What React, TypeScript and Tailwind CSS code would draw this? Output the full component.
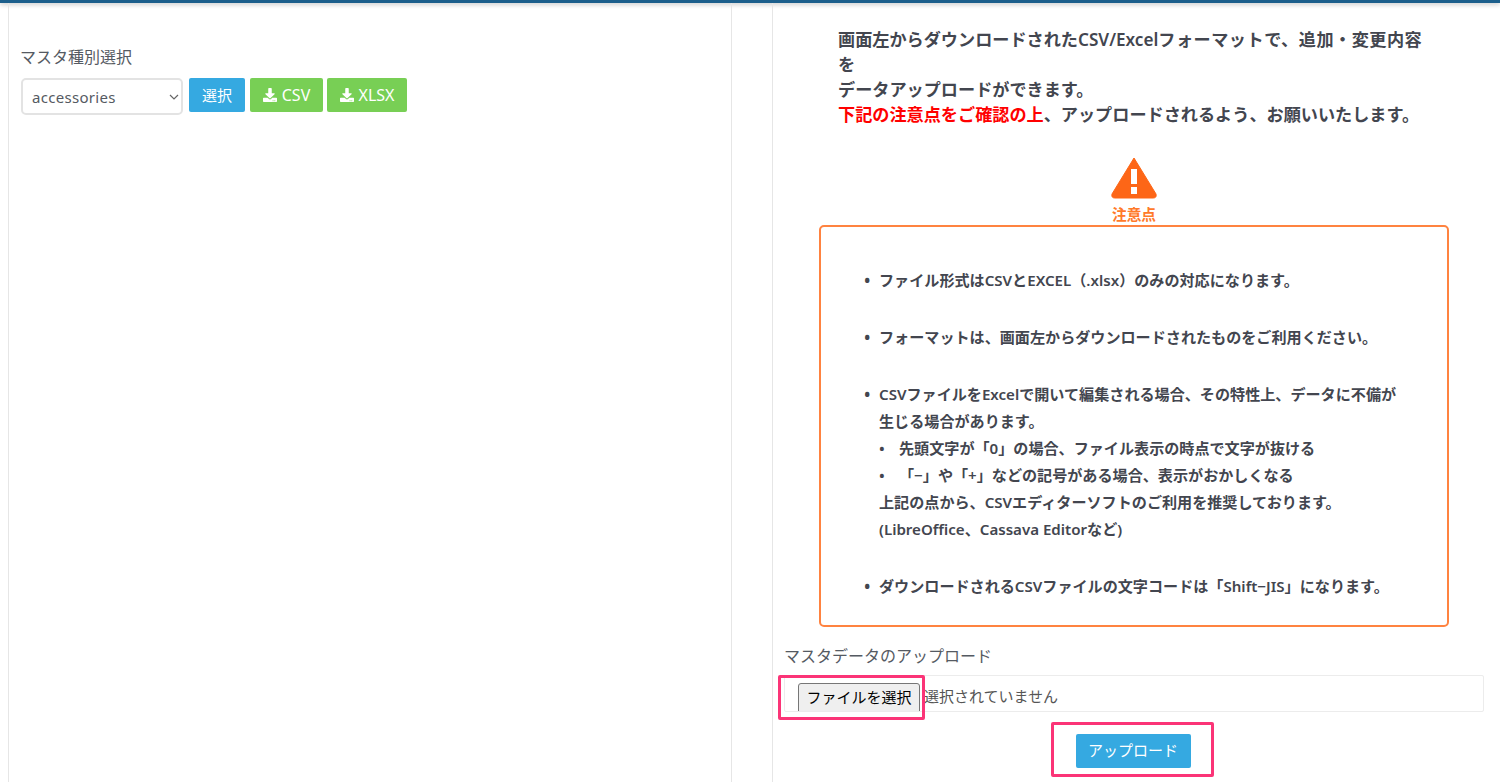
import React from "react";

const font = { fontFamily: '"Noto Sans", "Noto Sans CJK JP", sans-serif' };

function DownloadIcon() {
  return (
    <svg width="14" height="14" viewBox="0 0 512 512" fill="currentColor" className="shrink-0">
      <path d="M216 0h80c13.300 0 24 10.700 24 24v168h87.700c17.800 0 26.700 21.500 14.100 34.100L269.700 378.300c-7.500 7.500-19.800 7.500-27.300 0L90.100 226.100c-12.600-12.600-3.700-34.100 14.100-34.100H192V24c0-13.300 10.700-24 24-24zm296 376v112c0 13.300-10.700 24-24 24H24c-13.300 0-24-10.700-24-24V376c0-13.300 10.700-24 24-24h146.700l49 49c20.100 20.100 52.500 20.100 72.600 0l49-49H488c13.300 0 24 10.700 24 24zm-124 88c0-11-9-20-20-20s-20 9-20 20 9 20 20 20 20-9 20-20zm64 0c0-11-9-20-20-20s-20 9-20 20 9 20 20 20 20-9 20-20z" />
    </svg>
  );
}

function GreenButton({ label, width }: { label: string; width: string }) {
  return (
    <button className={`h-[34px] ${width} flex items-center justify-center gap-[5px] bg-[#78cf55] rounded-[2px] text-white text-[16px]`}>
      <DownloadIcon />
      <span>{label}</span>
    </button>
  );
}

function Line({ children, className = "" }: { children: React.ReactNode; className?: string }) {
  return <div className={`h-[27px] leading-[27px] whitespace-nowrap ${className}`}>{children}</div>;
}

function Bullet({ children, className = "" }: { children: React.ReactNode; className?: string }) {
  return (
    <li className={`flex ${className}`}>
      <span className="w-[15px] shrink-0 h-[27px] leading-[27px] text-[17px]">•</span>
      <div>{children}</div>
    </li>
  );
}

export default function App() {
  return (
    <div className="relative w-[1500px] h-[782px] overflow-hidden bg-white text-[#4b4f58]" style={font}>
      <div className="h-[3px] bg-[#1c5f8c] shadow-[0_1px_5px_rgba(0,0,0,0.3)]" />
      <div className="flex h-[779px] pl-2">
        <section className="w-[724px] shrink-0 border-x border-[#e6e6e6] pl-[11px] pt-[42px]">
          <h2 className="text-[16px] leading-[24px] text-[#555a62] font-normal mb-[9px]">マスタ種別選択</h2>
          <div className="flex items-start pl-[1px]">
            <div className="relative w-[162px] h-[37px] mr-[6px] border-2 border-[#e3e3e3] rounded-[5px] bg-white flex items-center pl-[9px] pt-[1px] text-[15px] text-[#555a62] tracking-[0.3px]">
              accessories
              <svg className="absolute right-[2px] top-[12px]" width="10" height="10" viewBox="0 0 10 10" fill="none" stroke="#666" strokeWidth="1.2">
                <path d="M1 3l4 4 4-4" />
              </svg>
            </div>
            <button className="w-[56px] h-[34px] mr-[5px] bg-[#35a9e1] rounded-[2px] text-white text-[15px]">選択</button>
            <GreenButton label="CSV" width="w-[73px] mr-[4px]" />
            <GreenButton label="XLSX" width="w-[80px]" />
          </div>
        </section>

        <section className="ml-[40px] flex-1 border-l border-[#e6e6e6] pl-[11px] pr-[16px] pt-[24px]">
          <div className="ml-[54px] w-[600px] text-[17.150px] leading-[25px] font-semibold text-[#43464f]">
            <div>
              画面左からダウンロードされたCSV/Excel<span className="tracking-[0.5px]">フォーマットで、追加・変更内容</span>
            </div>
            <div>を</div>
            <div>データアップロードができます。</div>
            <div>
              <span className="text-[#ff0000]">下記の注意点をご確認の上</span>、アップロードされるよう、お願いいたします。
            </div>
          </div>

          <div className="flex flex-col items-center mt-[29px] ml-[35px] w-[630px]">
            <svg width="46" height="43" viewBox="0 0 46 43">
              <path d="M23 2 L45 38 Q46 42 42 42 L4 42 Q0 42 1 38 Z" fill="#fd6617" stroke="#fd6617" strokeLinejoin="round" />
              <rect x="20" y="13" width="6" height="15" fill="#fff" />
              <rect x="20" y="31" width="6" height="7" fill="#fff" />
            </svg>
            <div className="text-[14.700px] leading-[20px] font-bold text-[#ff7a2a] mt-[5px]">注意点</div>
          </div>

          <div className="ml-[35px] mt-[1px] w-[630px] h-[402px] border-2 border-[#ff8340] rounded-[5px] pl-[43px] pt-[40px] text-[15.100px] font-semibold text-[#43464f]">
            <ul>
              <Bullet className="mb-[30px]"><Line>ファイル形式はCSVとEXCEL（.xlsx）のみの対応になります。</Line></Bullet>
              <Bullet className="mb-[30px]"><Line>フォーマットは、画面左からダウンロードされたものをご利用ください。</Line></Bullet>
              <Bullet className="mb-[30px]">
                <Line>CSVファイルをExcelで開いて編集される場合、その特性上、データに不備が</Line>
                <Line>生じる場合があります。</Line>
                <Line><span className="inline-block w-[20px]">•</span>先頭文字が「0」の場合、ファイル表示の時点で文字が抜ける</Line>
                <Line><span className="inline-block w-[20px]">•</span>「−」や「+」などの記号がある場合、表示がおかしくなる</Line>
                <Line>上記の点から、CSVエディターソフトのご利用を推奨しております。</Line>
                <Line>(LibreOffice、Cassava Editorなど)</Line>
              </Bullet>
              <Bullet><Line>ダウンロードされるCSVファイルの文字コードは「Shift−JIS」になります。</Line></Bullet>
            </ul>
          </div>

          <div className="text-[16px] leading-[24px] text-[#555a62] mt-[17px] mb-[7px]">マスタデータのアップロード</div>
          <div className="h-[37px] w-[700px] overflow-hidden border border-[#ececec] rounded-[2px] flex items-start pt-[7px] pl-[13px] text-[15px] leading-[27px] text-[#555]">
            <button className="h-[32px] w-[122px] shrink-0 pb-[5px] bg-[#efefef] border border-[#767676] rounded-[3px] text-black text-[15px] mr-[4px]">ファイルを選択</button>
            選択されていません
          </div>
          <div className="flex justify-center w-[698px] mt-[22px]">
            <button className="w-[115px] h-[34px] pb-[2px] bg-[#35a9e1] rounded-[2px] text-white text-[15px]">アップロード</button>
          </div>
        </section>
      </div>

      <div className="absolute left-[778px] top-[675px] w-[147px] h-[45px] border-[3px] border-[#fb3477] rounded-[2px]" />
      <div className="absolute left-[1051px] top-[722px] w-[163px] h-[55px] border-[3px] border-[#fb3477] rounded-[2px]" />
    </div>
  );
}
